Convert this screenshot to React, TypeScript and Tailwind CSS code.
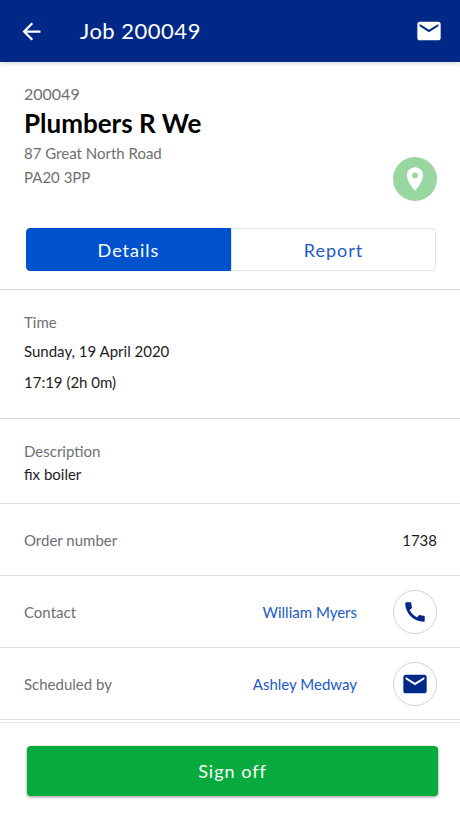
import { useState } from "react";
import type { ReactNode } from "react";
import { MdArrowBack, MdCall, MdEmail, MdPlace } from "react-icons/md";

const job = {
  id: "200049",
  customer: "Plumbers R We",
  address: ["87 Great North Road", "PA20 3PP"],
  date: "Sunday, 19 April 2020",
  time: "17:19 (2h 0m)",
  description: "fix boiler",
  orderNumber: "1738",
  contact: "William Myers",
  scheduledBy: "Ashley Medway",
};

const tabs = ["Details", "Report"];

interface RowProps {
  label: string;
  children: ReactNode;
}

const Row = ({ label, children }: RowProps) => (
  <div className="flex min-h-[72px] items-center justify-between border-b border-[#dedede] pl-6 pr-[23px]">
    <dt className="text-[#6f6f6f]">{label}</dt>
    <dd className="flex items-center gap-9">{children}</dd>
  </div>
);

interface RoundButtonProps {
  label: string;
  children: ReactNode;
}

const RoundButton = ({ label, children }: RoundButtonProps) => (
  <button
    type="button"
    aria-label={label}
    className="flex size-11 items-center justify-center rounded-full border border-[#d2d2d2] text-[#002886]"
  >
    {children}
  </button>
);

const App = () => {
  const [active, setActive] = useState("Details");

  return (
    <div className="flex min-h-screen flex-col bg-white font-['Lato',sans-serif] text-[15px] leading-6 text-[#1c1c1c]">
      <header className="flex h-[62px] items-center bg-[#002886] pl-[18px] pr-[17px] text-white shadow-[0_2px_4px_rgba(0,0,0,0.14)]">
        <button type="button" aria-label="Back">
          <MdArrowBack size={27} />
        </button>
        <h1 className="ml-[35px] flex-1 text-[22px] tracking-[0.5px]">Job {job.id}</h1>
        <button type="button" aria-label="Messages">
          <MdEmail size={28} />
        </button>
      </header>

      <main className="flex-1">
        <section className="border-b border-[#d6d9dc] px-6 pb-[18px] pt-5">
          <div className="-mr-px flex items-end justify-between">
            <div className="text-[#6f6f6f]">
              <p className="text-base">{job.id}</p>
              <h2 className="mb-px text-[26px] font-bold leading-[34px] text-black">{job.customer}</h2>
              {job.address.map((line) => (
                <p key={line}>{line}</p>
              ))}
            </div>
            <button
              type="button"
              aria-label="Show on map"
              className="-mb-3 flex size-11 items-center justify-center rounded-full bg-[#98d7a0] text-white"
            >
              <MdPlace size={28} />
            </button>
          </div>

          <div role="tablist" className="ml-0.5 mt-[39px] flex h-[43px]">
            {tabs.map((tab) => (
              <button
                key={tab}
                type="button"
                role="tab"
                aria-selected={tab === active}
                onClick={() => setActive(tab)}
                className={
                  tab === active
                    ? "flex-1 border border-[#0052cc] bg-[#0052cc] text-lg tracking-[1px] text-white first:rounded-l last:rounded-r"
                    : "flex-1 border border-[#dce5ec] text-lg tracking-[1px] text-[#1d5bc4] first:rounded-l last:rounded-r"
                }
              >
                {tab}
              </button>
            ))}
          </div>
        </section>

        <dl>
          <div className="border-b border-[#dedede] px-6 pb-6 pt-5">
            <dt className="text-[#6f6f6f]">Time</dt>
            <dd className="mt-[5px]">{job.date}</dd>
            <dd className="mt-[7px]">{job.time}</dd>
          </div>
          <div className="border-b border-[#dedede] px-6 pb-[17px] pt-[21px]">
            <dt className="leading-[22px] text-[#6f6f6f]">Description</dt>
            <dd>{job.description}</dd>
          </div>
          <Row label="Order number">{job.orderNumber}</Row>
          <Row label="Contact">
            <a href="#contact" className="text-[#2259c9]">{job.contact}</a>
            <RoundButton label="Call contact">
              <MdCall size={26} />
            </RoundButton>
          </Row>
          <Row label="Scheduled by">
            <a href="#scheduler" className="text-[#2259c9]">{job.scheduledBy}</a>
            <RoundButton label="Email scheduler">
              <MdEmail size={28} />
            </RoundButton>
          </Row>
        </dl>
      </main>

      <footer className="mt-0.5 border-t border-[#e8e8e8] pb-[22px] pl-[27px] pr-[22px] pt-[23px]">
        <button
          type="button"
          className="h-[50px] w-full rounded bg-[#07aa3c] text-lg tracking-[1px] text-white shadow-[0_1px_3px_rgba(0,0,0,0.45)]"
        >
          Sign off
        </button>
      </footer>
    </div>
  );
};

export default App;
